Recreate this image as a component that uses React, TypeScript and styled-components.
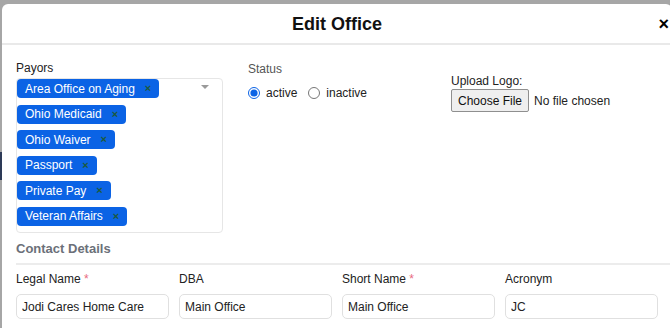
import React from "react";
import styled, { createGlobalStyle } from "styled-components";

const Global = createGlobalStyle`
  html, body { margin: 0; padding: 0; overflow: hidden; }
  body { background: #a6a6a6; font-family: "Liberation Sans", Arial, sans-serif; color: #222; }
  * { box-sizing: border-box; }
`;

const Page = styled.div`
  display: flex;
  width: 670px;
  height: 328px;
  padding-top: 4px;
  overflow: hidden;
`;

const BackStrip = styled.div`
  width: 2px;
  flex: none;
  display: flex;
  flex-direction: column;
  padding-top: 148px;
`;

const BackNav = styled.div`
  height: 28px;
  background: #2d3a57;
`;

const Modal = styled.div`
  width: 670px;
  flex: none;
  background: #fff;
  border-top-left-radius: 6px;
  border-top-right-radius: 6px;
`;

const Header = styled.div`
  height: 41px;
  display: flex;
  align-items: center;
  justify-content: center;
  position: relative;
  border-bottom: 2px solid #e9e9e9;
`;

const Title = styled.h2`
  margin: 0;
  font-size: 18px;
  font-weight: 700;
  color: #111;
  padding-top: 1px;
`;

const Close = styled.span`
  position: absolute;
  right: 3px;
  top: 10px;
  font-size: 18px;
  font-weight: 700;
  color: #000;
  line-height: 20px;
`;

const Body = styled.div`
  padding: 16px 0 0 14px;
`;

const TopGrid = styled.div`
  display: grid;
  grid-template-columns: 207px 178px 1fr;
  column-gap: 25px;
`;

const Field = styled.div`
  display: flex;
  flex-direction: column;
`;

const Label = styled.label<{ $muted?: boolean; $offset?: number }>`
  font-size: 12px;
  line-height: 14px;
  color: ${(p) => (p.$muted ? "#555" : "#222")};
  margin-top: ${(p) => p.$offset ?? 0}px;
`;

const SelectBox = styled.div`
  margin-top: 3px;
  height: 155px;
  border: 1px solid #e6e6e6;
  border-radius: 4px;
  position: relative;
  display: flex;
  flex-direction: column;
  align-items: flex-start;
  gap: 6.6px;
`;

const Caret = styled.span`
  position: absolute;
  right: 13px;
  top: 6px;
  width: 0;
  height: 0;
  border-left: 4px solid transparent;
  border-right: 4px solid transparent;
  border-top: 4px solid #9a9a9a;
`;

const Chip = styled.span`
  display: inline-flex;
  align-items: center;
  height: 19px;
  padding: 0 8px;
  background: #0b63e5;
  color: #fff;
  border-radius: 4px;
  font-size: 12px;
  gap: 10px;
`;

const ChipX = styled.span`
  color: #1e5a3a;
  font-size: 11px;
  font-weight: 700;
  line-height: 1;
`;

const RadioRow = styled.div`
  display: flex;
  align-items: center;
  margin-top: 10px;
  font-size: 12px;
`;

const RadioOpt = styled.label`
  display: inline-flex;
  align-items: center;
  gap: 6px;
  margin-right: 11px;
`;

const Radio = styled.input`
  width: 12px;
  height: 12px;
  margin: 0;
  accent-color: #0b63e5;
`;

const FileRow = styled.div`
  display: flex;
  align-items: center;
  gap: 5px;
  margin-top: 1px;
  font-size: 12px;
`;

const FileButton = styled.button`
  height: 23px;
  padding: 0 6px;
  font-family: inherit;
  font-size: 12px;
  color: #111;
  background: #efefef;
  border: 1px solid #8f8f8f;
  border-radius: 2px;
`;

const SectionTitle = styled.h3`
  margin: 8px 0 0 0;
  padding: 0 0 7px 0;
  font-size: 13px;
  line-height: 15px;
  font-weight: 700;
  color: #6b7079;
  border-bottom: 2px solid #ececec;
`;

const ContactGrid = styled.div`
  display: grid;
  grid-template-columns: repeat(4, 153px);
  column-gap: 10px;
  padding-top: 7px;
`;

const Req = styled.span`
  color: #e86a80;
`;

const TextInput = styled.input`
  margin-top: 8px;
  height: 25px;
  width: 153px;
  border: 1px solid #e0e0e0;
  border-radius: 5px;
  padding: 0 5px;
  font-family: inherit;
  font-size: 12px;
  color: #222;
  outline: none;
`;

const payors = [
  "Area Office on Aging",
  "Ohio Medicaid",
  "Ohio Waiver",
  "Passport",
  "Private Pay",
  "Veteran Affairs",
];

const contacts = [
  { label: "Legal Name", req: true, value: "Jodi Cares Home Care" },
  { label: "DBA", req: false, value: "Main Office" },
  { label: "Short Name", req: true, value: "Main Office" },
  { label: "Acronym", req: false, value: "JC" },
];

export default function App() {
  return (
    <>
      <Global />
      <Page>
        <BackStrip>
          <BackNav />
        </BackStrip>
        <Modal>
          <Header>
            <Title>Edit Office</Title>
            <Close>×</Close>
          </Header>
          <Body>
            <TopGrid>
              <Field>
                <Label>Payors</Label>
                <SelectBox>
                  {payors.map((p) => (
                    <Chip key={p}>
                      {p}
                      <ChipX>×</ChipX>
                    </Chip>
                  ))}
                  <Caret />
                </SelectBox>
              </Field>
              <Field>
                <Label $muted $offset={1}>Status</Label>
                <RadioRow>
                  <RadioOpt>
                    <Radio type="radio" name="status" defaultChecked />
                    active
                  </RadioOpt>
                  <RadioOpt>
                    <Radio type="radio" name="status" />
                    inactive
                  </RadioOpt>
                </RadioRow>
              </Field>
              <Field>
                <Label $offset={13}>Upload Logo:</Label>
                <FileRow>
                  <FileButton type="button">Choose File</FileButton>
                  <span>No file chosen</span>
                </FileRow>
              </Field>
            </TopGrid>
            <SectionTitle>Contact Details</SectionTitle>
            <ContactGrid>
              {contacts.map((c) => (
                <Field key={c.label}>
                  <Label>
                    {c.label}
                    {c.req && <Req> *</Req>}
                  </Label>
                  <TextInput defaultValue={c.value} />
                </Field>
              ))}
            </ContactGrid>
          </Body>
        </Modal>
      </Page>
    </>
  );
}
